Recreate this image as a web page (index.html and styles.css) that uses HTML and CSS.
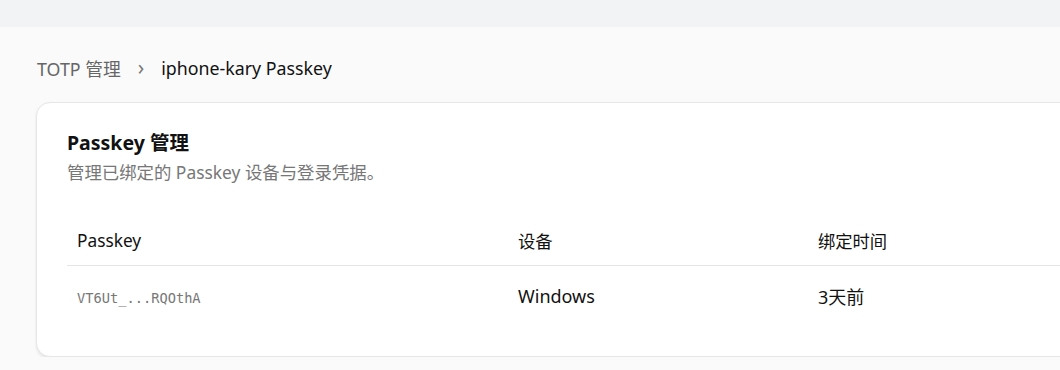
FILE: index.html
```html
<!DOCTYPE html>
<html lang="zh-CN">
<head>
    <title>Passkey 管理</title>
    <meta name="viewport" content="width=device-width, initial-scale=1.0">
    <link rel="stylesheet" href="styles.css">
</head>
<body>

    <!-- Top bar -->
    <div class="topbar"></div>

    <main class="page">
        <nav class="breadcrumb">
            <span class="crumb-link">TOTP 管理</span>
            <span class="crumb-sep">&rsaquo;</span>
            <span class="crumb-current">iphone-kary Passkey</span>
        </nav>

        <section class="card">
            <h2>Passkey 管理</h2>
            <p class="card-desc">管理已绑定的 Passkey 设备与登录凭据。</p>

            <table class="passkey-table">
                <thead>
                    <tr>
                        <th class="col-key">Passkey</th>
                        <th class="col-device">设备</th>
                        <th>绑定时间</th>
                    </tr>
                </thead>
                <tbody>
                    <tr>
                        <td class="col-key"><code>VT6Ut_...RQOthA</code></td>
                        <td class="col-device">Windows</td>
                        <td>3天前</td>
                    </tr>
                </tbody>
            </table>
        </section>
    </main>

</body>
</html>
```

FILE: styles.css
```css
body {
    margin: 0;
    background: #fafafa;
    color: #111;
    font-family: 'Noto Sans', 'Noto Sans CJK SC', sans-serif;
    overflow: hidden;
}

.topbar {
    height: 27px;
    background: #f2f3f5;
}

.page {
    padding: 24px 0 0 36px;
    width: 1100px;
}

/* Breadcrumb */
.breadcrumb {
    display: flex;
    align-items: center;
    height: 34px;
    font-size: 17.8px;
    padding-left: 1px;
    margin-bottom: 17px;
}

.crumb-link {
    color: #666;
}

.crumb-sep {
    color: #777;
    font-size: 21px;
    margin: 0 17px 2px 17px;
}

.crumb-current {
    color: #111;
}

/* Card */
.card {
    background: #fff;
    border: 1px solid #e6e6e6;
    border-radius: 14px;
    box-shadow: 0 2px 3px rgba(0, 0, 0, 0.08);
    padding: 25px 30px 28px 30px;
}

.card h2 {
    margin: 0;
    font-size: 19.5px;
    font-weight: 700;
    line-height: 30px;
}

.card-desc {
    margin: 0;
    font-size: 17.4px;
    line-height: 28px;
    color: #777;
}

/* Table */
.passkey-table {
    width: 100%;
    border-collapse: collapse;
    margin-top: 30px;
}

.passkey-table th {
    text-align: left;
    font-weight: 400;
    font-size: 17.3px;
    height: 49px;
    padding: 0 10px;
    border-bottom: 1px solid #e5e5e5;
}

.passkey-table td {
    font-size: 18px;
    height: 60px;
    padding: 0 10px 2px;
}

.col-key {
    width: 421px;
}

.col-device {
    width: 280px;
}

code {
    font-family: 'DejaVu Sans Mono', monospace;
    font-size: 13.7px;
    color: #777;
}
```
